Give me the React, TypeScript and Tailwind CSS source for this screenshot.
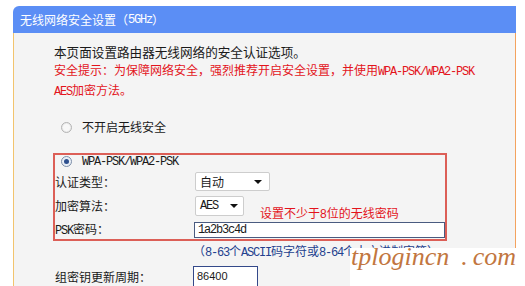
import React from "react";

function Mono({ children }: { children: React.ReactNode }) {
  return (
    <span className="font-['Liberation_Mono',monospace] text-[12px] tracking-[-1.2px]">
      {children}
    </span>
  );
}

function Arrow() {
  return (
    <div className="w-0 h-0 border-x-[4px] border-x-transparent border-t-[4px] border-t-[#111]" />
  );
}

function Radio({ checked }: { checked?: boolean }) {
  return (
    <div
      className={
        "w-[11px] h-[11px] rounded-full border flex items-center justify-center " +
        (checked
          ? "border-[#7d8ea8] bg-[#e8eef6]"
          : "border-[#b4b4b4] bg-[#ececec]")
      }
    >
      {checked ? (
        <div className="w-[5px] h-[5px] rounded-full bg-[#2d4f8e]" />
      ) : (
        <div className="w-[7px] h-[7px] rounded-full bg-[#f8f8f8]" />
      )}
    </div>
  );
}

export default function App() {
  return (
    <div className="relative w-[525px] h-[286px] overflow-hidden bg-white font-['Noto_Sans_CJK_SC',sans-serif] text-[12px] text-[#1a1a1a]">
      <div className="ml-[13px] pt-[6px] w-[503px] h-[286px] flex flex-col">
        <div className="h-[27px] shrink-0 bg-[#5b8ef5] rounded-tl-[6px] flex items-center pl-[7px] text-white text-[12px]">
          无线网络安全设置（<Mono>5GHz</Mono>）
        </div>
        <div className="flex-1 bg-[#f4f4f4] border-l border-l-[#f2c46e] border-r border-r-[#f4a35e] pl-[40px] pt-[10px]">
          <div className="leading-[18px] text-[12.6px]">本页面设置路由器无线网络的安全认证选项。</div>
          <div className="leading-[18px] text-[#e3141c]">
            安全提示：为保障网络安全，强烈推荐开启安全设置，并使用<Mono>WPA-PSK/WPA2-PSK</Mono>
          </div>
          <div className="leading-[18px] text-[#e3141c]">
            <Mono>AES</Mono>加密方法。
          </div>

          <div className="mt-[17px] h-[18px] flex items-center pl-[7px] gap-[10px]">
            <Radio />
            <span>不开启无线安全</span>
          </div>

          <div className="mt-[17px] -ml-[1px] w-[394px] border-2 border-[#dc5f57] pb-[1px]">
            <div className="h-[13px] flex items-center pl-[6px] gap-[10px]">
              <Radio checked />
              <Mono>WPA-PSK/WPA2-PSK</Mono>
            </div>
            <div className="mt-[4px] h-[19px] flex items-center">
              <div className="w-[140px]">认证类型：</div>
              <div className="w-[75px] h-[19px] bg-white border border-[#cdcdcd] rounded-[2px] flex items-center justify-between pl-[4px] pr-[7px]">
                <span>自动</span>
                <Arrow />
              </div>
            </div>
            <div className="mt-[5px] h-[20px] flex items-start">
              <div className="w-[140px] leading-[20px]">加密算法：</div>
              <div className="w-[49px] h-[20px] bg-white border border-[#cdcdcd] rounded-[2px] flex items-center justify-between pl-[4px] pr-[5px]">
                <Mono>AES</Mono>
                <Arrow />
              </div>
              <div className="ml-[16px] mt-[11px] leading-[12px] text-[#e3141c]">
                设置不少于<span className="font-['Liberation_Sans',sans-serif]">8</span>位的无线密码
              </div>
            </div>
            <div className="mt-[6px] h-[16px] flex items-center">
              <div className="w-[139px]">
                <Mono>PSK</Mono>密码：
              </div>
              <div className="w-[251px] h-[16px] bg-white border border-[#4a5b80] flex items-center pl-[3px]">
                <Mono>1a2b3c4d</Mono>
              </div>
            </div>
          </div>

          <div className="mt-[2px] ml-[139px] leading-[16px] text-[#23408e] whitespace-nowrap">
            （<Mono>8-63</Mono>个<Mono>ASCII</Mono>码字符或<Mono>8-64</Mono>个十六进制字符）
          </div>

          <div className="mt-[5px] h-[21px] flex items-center">
            <div className="w-[139px] pl-[1px]">组密钥更新周期：</div>
            <div className="w-[65px] h-[21px] bg-white border border-[#34498a] flex items-center pl-[3px] font-['Liberation_Sans',sans-serif] text-[11px]">
              86400
            </div>
          </div>
        </div>
      </div>

      <div className="absolute left-[350px] top-[248px] right-0 bottom-0 bg-white pl-[1px]">
        <div className="font-['Liberation_Serif',serif] italic text-[26px] leading-[18px] text-[#c27640] whitespace-nowrap">
          tplogincn<span className="ml-[12px]">.</span>
          <span className="ml-[5px]">com</span>
        </div>
      </div>
    </div>
  );
}
